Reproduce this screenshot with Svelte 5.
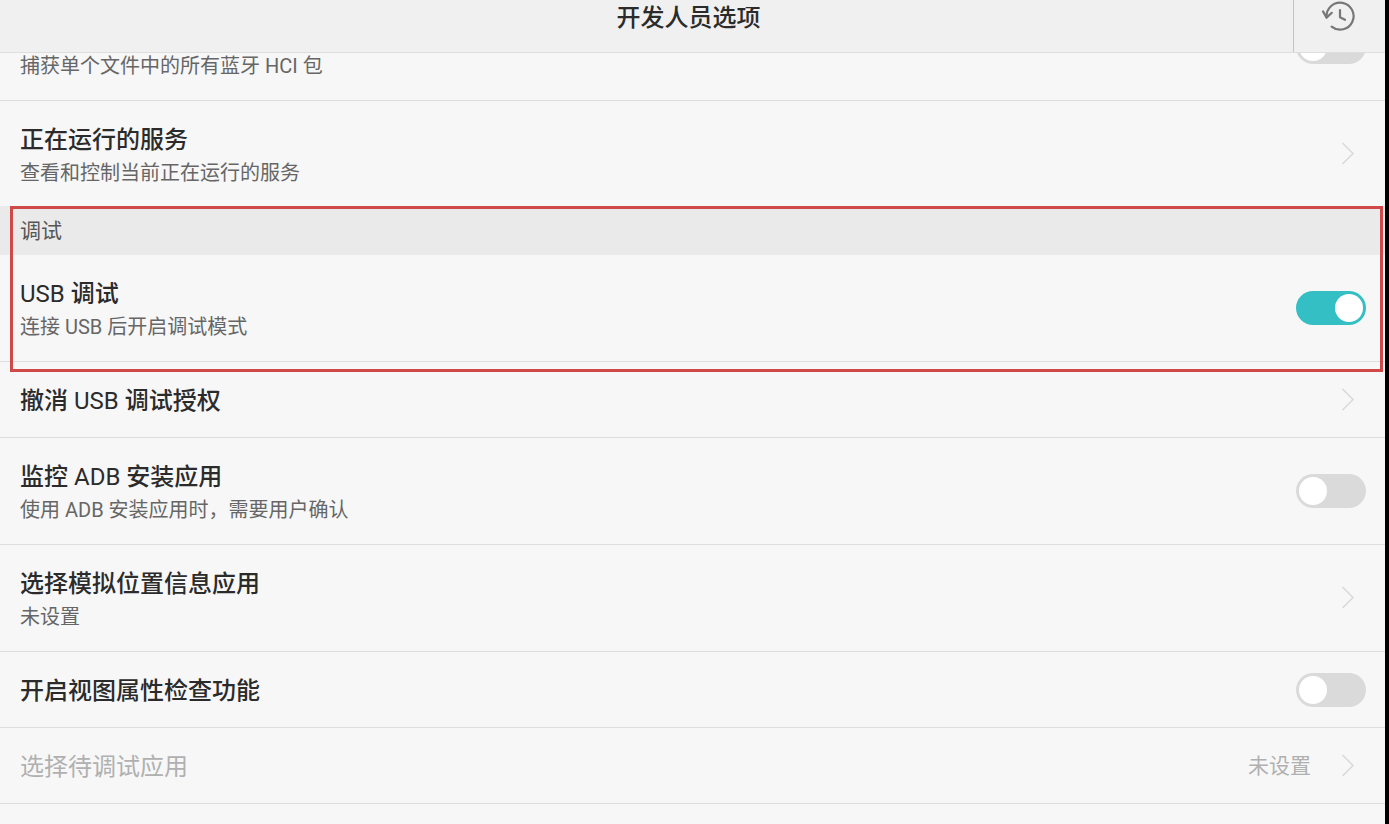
<script>
	/**
	 * Developer options screen, scrolled to the debugging section.
	 */
	let items = $state([
		{ id: 'hci', summary: '捕获单个文件中的所有蓝牙 HCI 包', type: 'switch', on: false, scrolled: true },
		{ id: 'services', title: '正在运行的服务', summary: '查看和控制当前正在运行的服务', type: 'link', last: true }
	]);

	let usb = $state([
		{ id: 'usb', title: 'USB 调试', summary: '连接 USB 后开启调试模式', type: 'switch', on: true }
	]);

	let debugItems = $state([
		{ id: 'revoke', title: '撤消 USB 调试授权', type: 'link' },
		{ id: 'adb', title: '监控 ADB 安装应用', summary: '使用 ADB 安装应用时，需要用户确认', type: 'switch', on: false },
		{ id: 'mock', title: '选择模拟位置信息应用', summary: '未设置', type: 'link' },
		{ id: 'inspect', title: '开启视图属性检查功能', type: 'switch', on: false },
		{ id: 'app', title: '选择待调试应用', value: '未设置', type: 'link', disabled: true }
	]);

	// Latin words in a title are set lighter than the Chinese around them
	const split = (text) => text.split(/([A-Z]+)/).filter(Boolean);
</script>

{#snippet texts(item)}
	<span class="texts">
		{#if item.title}
			<span class="title">{#each split(item.title) as part}{#if /[A-Z]/.test(part)}<span class="latin">{part}</span>{:else}{part}{/if}{/each}</span>
		{/if}
		{#if item.summary}<span class="summary">{item.summary}</span>{/if}
	</span>
{/snippet}

{#snippet row(item)}
	{#if item.type === 'switch'}
		<label class="row" class:double={item.summary} class:scrolled={item.scrolled} for={item.id}>
			{@render texts(item)}
			<input class="switch" type="checkbox" id={item.id} bind:checked={item.on} />
		</label>
	{:else}
		<button class="row" class:double={item.summary} class:last={item.last} disabled={item.disabled}>
			{@render texts(item)}
			{#if item.value}<span class="value">{item.value}</span>{/if}
			<svg class="chevron" width="14" height="24" viewBox="0 0 14 24" aria-hidden="true">
				<path d="M1.5 1 12 11.5 1.5 22" />
			</svg>
		</button>
	{/if}
{/snippet}

<div class="screen">
	<header>
		<h1>开发人员选项</h1>
		<button class="history" aria-label="历史">
			<svg width="40" height="34" viewBox="0 0 40 34" aria-hidden="true">
				<path d="M11.6 26.7A13.5 13.5 0 1 0 6.6 17.3" />
				<path d="M3 11.4 6.6 17.6 11.8 12.8" />
				<path d="M20 10v7.2l5 2.6" />
			</svg>
		</button>
	</header>

	<main>
		{#each items as item (item.id)}
			{@render row(item)}
		{/each}

		<section class="marked">
			<h2>调试</h2>
			{#each usb as item (item.id)}
				{@render row(item)}
			{/each}
		</section>

		{#each debugItems as item (item.id)}
			{@render row(item)}
		{/each}
	</main>
</div>

<style>
	:global(body) {
		background: #f7f7f7;
	}

	.screen {
		box-sizing: border-box;
		min-height: 100vh;
		overflow: hidden;
		border-right: 4px solid #000;
		background: #f7f7f7;
		color: #2b2b2b;
		font-family: Roboto, 'Noto Sans CJK SC', sans-serif;
	}

	header {
		position: relative;
		z-index: 1;
		display: grid;
		grid-template-columns: 1fr auto 1fr;
		background: #f0f0f0;
		border-bottom: 1px solid #dedede;
	}

	h1 {
		grid-column: 2;
		margin: 0;
		padding: 0 8px 16px 0;
		font-size: 24px;
		line-height: 36px;
		font-weight: 500;
	}

	.history {
		justify-self: end;
		display: flex;
		justify-content: center;
		width: 92px;
		padding: 0;
		border: 0;
		border-left: 1px solid #c4c4c4;
		background: none;
	}

	.history svg {
		fill: none;
		stroke: #777;
		stroke-width: 2.2;
		stroke-linecap: round;
		stroke-linejoin: round;
	}

	.row {
		box-sizing: border-box;
		display: flex;
		align-items: center;
		width: 100%;
		min-height: 76px;
		padding: 0 19px 0 20px;
		border: 0;
		border-bottom: 1px solid #dedede;
		background: none;
		color: inherit;
		font: inherit;
		text-align: left;
	}

	.row.double {
		min-height: 107px;
	}

	.row.last {
		min-height: 105px;
		border-bottom: 0;
	}

	/* slides under the header */
	.row.scrolled {
		margin-top: -59px;
	}

	.row.scrolled .texts {
		padding-top: 38px;
	}

	.row:disabled {
		color: #b0b0b0;
	}

	.texts {
		flex: 1;
		display: flex;
		flex-direction: column;
		padding-top: 2px;
	}

	.title {
		font-size: 24px;
		line-height: 36px;
		font-weight: 500;
	}

	.latin,
	.row:disabled .title {
		font-weight: 400;
	}

	.summary {
		color: #666;
		font-size: 20px;
		line-height: 30px;
	}

	.value {
		font-size: 21px;
		line-height: 30px;
		margin-right: 30px;
	}

	.chevron {
		margin-right: 11px;
		fill: none;
		stroke: #dadada;
		stroke-width: 1.6;
	}

	.switch {
		appearance: none;
		display: flex;
		align-items: center;
		box-sizing: border-box;
		width: 70px;
		height: 34px;
		margin: 0;
		padding: 0 3px;
		border-radius: 17px;
		background: #dadada;
	}

	.switch::before {
		content: '';
		width: 28px;
		height: 28px;
		border-radius: 50%;
		background: #fff;
	}

	.switch:checked {
		justify-content: flex-end;
		background: #33bfc4;
	}

	.marked {
		position: relative;
	}

	/* red frame over the section */
	.marked::after {
		content: '';
		position: absolute;
		inset: 0 2px -10px 10px;
		border: 3px solid #d04848;
		pointer-events: none;
	}

	h2 {
		margin: 0;
		padding: 1px 20px 0;
		background: #eaeaea;
		color: #555;
		font-size: 21px;
		line-height: 48px;
		font-weight: 400;
	}
</style>
